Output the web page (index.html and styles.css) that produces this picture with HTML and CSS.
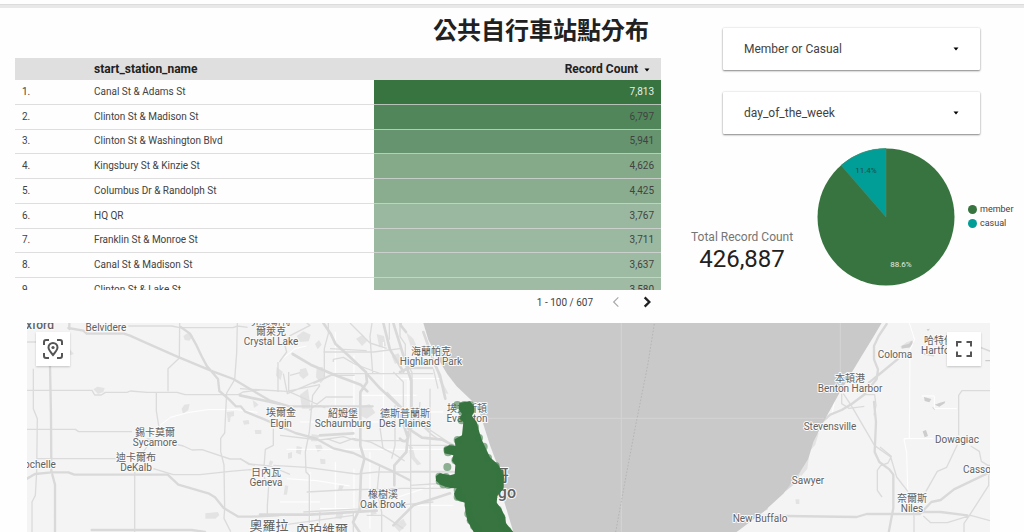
FILE: index.html
```html
<!DOCTYPE html>
<html lang="zh-Hant">
<head>
<meta charset="utf-8">
<meta name="viewport" content="width=device-width, initial-scale=1">
<title>公共自行車站點分布</title>
<link rel="stylesheet" href="styles.css">
</head>
<body>
<main class="report">
  <div class="overview">
    <section class="stations">
      <h1 class="title">公共自行車站點分布</h1>
      <div class="table-view">
        <table class="table">
          <thead>
            <tr><th class="col-rank"></th><th class="col-name">start_station_name</th><th class="col-count">Record Count<svg class="sort" viewBox="0 0 6 4"><path d="M0.5 0.5h5L3 3.5z"/></svg></th></tr>
          </thead>
          <tbody>
            <tr><td>1.</td><td>Canal St &amp; Adams St</td><td class="count light" style="background-color:#37743f">7,813</td></tr>
            <tr><td>2.</td><td>Clinton St &amp; Madison St</td><td class="count" style="background-color:#50865a">6,797</td></tr>
            <tr><td>3.</td><td>Clinton St &amp; Washington Blvd</td><td class="count" style="background-color:#65946e">5,941</td></tr>
            <tr><td>4.</td><td>Kingsbury St &amp; Kinzie St</td><td class="count" style="background-color:#85aa8a">4,626</td></tr>
            <tr><td>5.</td><td>Columbus Dr &amp; Randolph St</td><td class="count" style="background-color:#8aad8f">4,425</td></tr>
            <tr><td>6.</td><td>HQ QR</td><td class="count" style="background-color:#9ab89f">3,767</td></tr>
            <tr><td>7.</td><td>Franklin St &amp; Monroe St</td><td class="count" style="background-color:#9bb9a0">3,711</td></tr>
            <tr><td>8.</td><td>Canal St &amp; Madison St</td><td class="count" style="background-color:#9dbaa2">3,637</td></tr>
            <tr><td>9.</td><td>Clinton St &amp; Lake St</td><td class="count" style="background-color:#9fbba4">3,580</td></tr>
          </tbody>
        </table>
      </div>
      <div class="pager">
        <span>1 - 100 / 607</span>
        <button class="page-btn" type="button" aria-label="Previous page" disabled><svg viewBox="0 0 10 12"><path d="M7 2L3 6l4 4"/></svg></button>
        <button class="page-btn" type="button" aria-label="Next page"><svg viewBox="0 0 10 12"><path d="M3 2l4 4-4 4"/></svg></button>
      </div>
    </section>

    <section class="side">
      <div class="filters">
        <div class="filter">
          <select aria-label="Member or Casual"><option>Member or Casual</option></select>
          <svg class="caret" viewBox="0 0 6 4"><path d="M0.5 0.5h5L3 3.5z"/></svg>
        </div>
        <div class="filter">
          <select aria-label="day_of_the_week"><option>day_of_the_week</option></select>
          <svg class="caret" viewBox="0 0 6 4"><path d="M0.5 0.5h5L3 3.5z"/></svg>
        </div>
      </div>
      <div class="summary">
        <div class="score">
          <div class="score-label">Total Record Count</div>
          <div class="score-value">426,887</div>
        </div>
        <svg class="pie" viewBox="0 0 138 138">
          <circle cx="69" cy="69" r="68.5" fill="#37743f"/>
          <path d="M69 69V0.5A68.5 68.5 0 0 0 24.1 17.3Z" fill="#009e97" stroke="#4c8f73" stroke-width=".6"/>
          <text x="49" y="25" fill="#1d4a46">11.4%</text>
          <text x="84" y="119" fill="#e4ece5">88.6%</text>
        </svg>
        <ul class="legend">
          <li><i class="dot member"></i>member</li>
          <li><i class="dot casual"></i>casual</li>
        </ul>
      </div>
    </section>
  </div>

  <section class="map">
    <svg class="map-canvas" viewBox="27 323 963 209" preserveAspectRatio="xMinYMin slice">
      <rect x="27" y="323" width="963" height="209" fill="#f4f4f4"/>
      <g transform="translate(0 312) scale(.33333)" fill="none" stroke-linejoin="round">
        <!-- parks and built-up patches -->
        <g fill="#e3e3e3">
          <path d="M280 232l12-8 22 4-4 12-16 6zM545 290l8-12 16-2-4 18-16 12zM550 72l12-8 18 8-12 14-14-2zM680 300l22-2v14l-10 2-2 16h-6zM728 326l18-2 2 12-16 2zM758 264l18 14-14 10zM764 354h20v12h-18zM616 604l38-4 4 10-12 10h-30zM208 110l14 16-12 4zM950 168l18-4 6 36-12 14-14-18zM900 172l18-4 8 20-16 14-12-12zM830 165l18 14-6 26-14-14zM890 72l20-14 22 10-6 20-26 2zM945 96l12-12 8 14-12 14zM1068 80l20-12 14 18-16 16zM1130 66l22 6 6 30-20 4zM900 248l24-18 8 60h-26zM1080 286l28-10 18 26-26 18-20-10zM935 366l24 4-8 18h-18zM945 400l18-2 6 14-16 8zM864 424l12-4v18l-12 2zM890 402l16 4-4 22-14-6zM960 440l16 2v14h-14zM810 445l10 4-6 12-8-4zM855 520l10 2-4 26h-10zM1018 520h14l-6 14h-12zM1226 400l12 6 8 30 18 20-12 4-22-26zM760 266l12 8-10 8zM1175 132l20-8 12 20-22 12zM1010 600l20 6-6 16-18-4zM1180 640l30-20 10 18-22 22zM1110 596l16-4 4 14-18 4z"/>
          <path d="M1218 60l22 20 28 64-14-6-22-36zM1310 176l22 44 14 26-10-2-18-38zM2700 105l20-14 18-6 4 8-14 16-22-2zM2428 400l12-14 6-24 10 2-10 34-14 16zM2388 480l30-42 8 2-4 30-18 22zM2386 562h12v14h-10z"/>
        </g>
        <g fill="#cdcdcd"><path d="M2705 101l22-6 8-9 4 8-10 12-24 4zM2772 255l22 6-6 10-14-4zM2804 278l16-6 16-4-2 6-16 10zM2768 358l10-4 6 18-10 4zM2796 286l10 2-2 6zM2780 52l10-2-6 8zM2956 144h14v4h-14z"/></g>
        <!-- local roads -->
        <g stroke="#fff" stroke-width="3">
          <path d="M480 340l32-24 50-14 60-9h90l60 8M835 150l50-40 34-8M1006 60v250M1062 130v250M1150 90v230M1190 200h130M900 330h240M860 412h480M1006 450v160M1062 470v150M1110 420v230M1180 560l120-40M860 500l90 6 100 16M1224 200v140M1240 300h90M930 480v170M960 590h160M1080 250h170M840 570h120M1140 580h220"/>
          <path d="M2728 33l16 50-14 30-2 266-16 2 8 40 4 140M2712 380h88M2765 252h38v38h68M2495 310l10-50 14-20"/>
        </g>
        <!-- arterial roads -->
        <g stroke="#dbdbdb" stroke-width="4">
          <path d="M100 170v120l12 30-2 160-4 70-10 20v90M81 352h145l10 7h160M81 235h195l8 14h20l12-8h65l10-4 50 4h90l24 7h160l14-8 50-6M112 440h240M404 480v180M385 42h130l24 5h160l14-5 30 4M539 33l-1 105-34 32v68M712 33l-2 90-6 80-24 40-6 120-12 16v40l10 40 2 130-2 30 20 40M469 242v55l8 50M440 380l60 10 50 12 26 12 30-1 84 28h32l25 16 18 2M460 470l60 18h80l90-10 60-5 60 4M430 420l20-30M81 90h30l50-20"/>
          <path d="M985 33v32l-12 44v90M870 190l30-8M970 120h150l80-10M850 185l12 60 140-60h60M940 215l54-25h70M1000 187l10-2h290M1000 150v-8l30-6 34 20 80 30M720 230l140 8 100-20M866 180v58l110 50M1058 255h-80l-50 40M960 220l-22 30-10 110-12 60 2 60 10 10v160M820 350v50l-24 12-6 80 16 30-4 60v30M720 440l30 16 60 6 60 25M820 460l100 6 150 20 60-6h280M920 540l110-6 180-5h160M840 370l120 14 70-10 40 12h140M980 380l40 14 40-15 54 12 70 36 30 20M1145 300l-6 40 10 70M1139 460l-8 80 14 60v60M1232 330v330M1168 33v50M1116 33l-6 40 8 110M1200 33v40l16 24v50l20 34v110l24 36 34 40 20 14M1050 33l60 60 50 16M1160 240l60 60 80 72M1180 180l30 30v80M1223 400h120M1230 478h130M1230 520l160-10M1260 270l-6 60 90 60M1290 230v430M1300 170l14 60M1060 600v60M960 600l-4 60M1100 610h50l60 40"/>
          <path d="M838 150l22 -30-8-30 20-20 58-30-10-7M834 150v90M990 110l110 6M910 600l180-10 210-20M840 640l220-30M1185 280v120l-10 40"/>
          <path d="M2530 245l24 36 70 120 48 34 18 60 34 44M2525 245v30l22 14 46-6M2872 398l-32 68-28 12-34 60M2876 370V250l10-14h84M2912 402l26 16 6 30 20 12h6M2966 490v30l-60 94-14 20v26M2742 600v60M2770 612l22 20h50l70-22 58 16M2640 405l34 28-10 20-22 8-10 14v60l14 20M2590 248h34l4 32-6 30"/>
        </g>
        <!-- highways -->
        <g stroke="#d9d9d9" stroke-width="8" stroke-linecap="round">
          <path d="M150 160l3 150 1 168M208 33v18M81 500l24-14 50-5h50l18 7h280l32 30 90 26 20 12 26 32 44 26h40l80-4M157 488l8 30v142M205 48l45 8 10 9h112l18 6 40 18 100 44 110 46 60 22 40 24 68 40 60 18h250M275 654h300l40 6M542 45l28 20 20 36 16 34 14 26 34 40 4 36 30 26 20 20h14l14 16 50 20 100 44 60 16 54 30 60 14 120 56 50 26" stroke-width="7"/>
          <path d="M970 33l22 32 14 30 40 36 52 50 3 30-20 30v160l12 40-10 40-4 110-20 40 20 30 14 70M878 126l54 32 74 32 76 28 20 20M1100 185l40 44 60 56 24 64 42 28 60 6 40 20M1225 360l-6 60-36 40v60M780 608h150l200-12M1224 378l-10-30-20-60M1218 60l-16-20V33M1180 33l20 64 24 80 10 30v140M1270 60l36 100 14 30 16 70M1200 180l26-12h70M960 370l100-6M1180 640l60-60 110-36M720 250l120 26 M1150 33l20 80 40 66M1200 380c16 20 30-4 24-20M1350 400l20 30"/>
          <path d="M2660 36l-24 36-14 30v40l12 30-4 30-14 16M2695 140l-56 46-32 26-12 34-40 30-30 18-34 14-46 40-20 60-22 48-12 50-30 24-60 40-54 48-44 36M2622 270l6 60-4 90 14 30 30 22 12 16v100l-14 74M1940 612h420M2360 612l210 3 30-9h160l34-36 28-6 40-32 50-24 50-24h16M2190 660l50-40 60-30M2742 600h80l80 10" stroke-width="7"/>
          <path d="M2890 88l50 18 32 12M2770 125l30 6" stroke-width="5"/>
        </g>
        <!-- lake -->
        <path fill="#c9c9c9" d="M1270 33l15 50 25 50 32 54 28 36 44 42 26 40 30 95 30 80 10 80 30 100h670l80-60 60-55 50-65 25-40 15-50 25-50 55-100 60-100 40-65 25-42z"/>
        <g stroke="#d4d4d4" stroke-width="3"><path d="M1864 33v627M1440 319h1032M2521 33v200"/></g>
        <path stroke="#aaa" stroke-width="2" stroke-dasharray="5 5" d="M1963 36l-20 124-36 180-36 190-24 130"/>
      </g>
      <g class="labels">
        <text x="26" y="329" class="lg start">xford</text>
        <text x="106" y="331">Belvidere</text>
        <text x="271" y="325">克裏斯特</text><text x="271" y="335">爾萊克</text><text x="271" y="345">Crystal Lake</text>
        <text x="431" y="355">海蘭帕克</text><text x="431" y="365">Highland Park</text>
        <text x="281" y="416">埃爾金</text><text x="281" y="427">Elgin</text>
        <text x="343" y="417">紹姆堡</text><text x="343" y="427">Schaumburg</text>
        <text x="405" y="417">德斯普蘭斯</text><text x="405" y="427">Des Plaines</text>
        <text x="467" y="412">埃文斯頓</text><text x="467" y="422">Evanston</text>
        <text x="155" y="436">錫卡莫爾</text><text x="155" y="446">Sycamore</text>
        <text x="136" y="461">迪卡爾布</text><text x="136" y="471">DeKalb</text>
        <text x="24" y="468" class="start">ochelle</text>
        <text x="266" y="476">日內瓦</text><text x="266" y="486">Geneva</text>
        <text x="383" y="498">橡樹溪</text><text x="383" y="508">Oak Brook</text>
        <text x="269" y="530" class="md">奧羅拉</text><text x="322" y="534" class="md">內珀維爾</text>
        <text x="509" y="481" class="city">芝加哥</text><text x="516" y="498" class="city">Chicago</text>
        <text x="850" y="382">本頓港</text><text x="850" y="392">Benton Harbor</text>
        <text x="895" y="358">Coloma</text>
        <text x="939" y="344">哈特佛</text><text x="921" y="354" class="start">Hartford</text>
        <text x="830" y="430">Stevensville</text>
        <text x="957" y="443">Dowagiac</text>
        <text x="963" y="473" class="start">Cassopolis</text>
        <text x="808" y="484">Sawyer</text>
        <text x="912" y="502">奈爾斯</text><text x="912" y="512">Niles</text>
        <text x="760" y="522">New Buffalo</text>
      </g>
      <!-- bike stations -->
      <g transform="translate(400 312) scale(.33333)" fill="#37743f">
        <path d="M178 272L210 268L222 284L222 300L216 312L230 330L238 360L246 385L258 410L270 436L295 458L312 490L310 530L292 552L290 572L304 590L316 616L318 634L342 662H222L202 626L196 596L194 572L168 562L162 545L170 528L150 528L124 520L108 506L108 492L120 484L150 490L164 486L166 460L156 446L160 430L134 424L132 408L148 400L166 402L164 382L186 370L190 330L178 320L186 306L176 292z"/>
        <g fill-opacity=".55">
          <circle cx="172" cy="279" r="12"/><circle cx="193" cy="279" r="12"/><circle cx="210" cy="279" r="12"/><circle cx="214" cy="294" r="12"/><circle cx="187" cy="300" r="12"/><circle cx="185" cy="325" r="12"/><circle cx="225" cy="345" r="12"/><circle cx="237" cy="378" r="12"/><circle cx="251" cy="404" r="12"/><circle cx="173" cy="384" r="12"/><circle cx="142" cy="413" r="12"/><circle cx="144" cy="421" r="12"/><circle cx="154" cy="411" r="14"/><circle cx="142" cy="465" r="12"/><circle cx="166" cy="445" r="12"/><circle cx="118" cy="494" r="12"/><circle cx="119" cy="507" r="12"/><circle cx="130" cy="517" r="12"/><circle cx="145" cy="518" r="12"/><circle cx="138" cy="495" r="12"/><circle cx="173" cy="534" r="12"/><circle cx="173" cy="555" r="12"/><circle cx="185" cy="558" r="12"/><circle cx="205" cy="580" r="12"/><circle cx="205" cy="605" r="12"/><circle cx="212" cy="625" r="12"/><circle cx="222" cy="642" r="12"/><circle cx="232" cy="652" r="12"/><circle cx="280" cy="578" r="12"/><circle cx="293" cy="593" r="12"/><circle cx="304" cy="616" r="12"/><circle cx="308" cy="640" r="12"/><circle cx="322" cy="656" r="12"/><circle cx="287" cy="462" r="12"/><circle cx="300" cy="482" r="12"/><circle cx="302" cy="504" r="12"/><circle cx="300" cy="522" r="12"/><circle cx="264" cy="438" r="12"/><circle cx="279" cy="548" r="12"/>
        </g>
      </g>
    </svg>
    <button class="map-btn locate" type="button" aria-label="Select area"><svg viewBox="0 0 20 20"><path d="M1 6V3q0-2 2-2h3M14 1h3q2 0 2 2v3M19 14v3q0 2-2 2h-3M6 19H3q-2 0-2-2v-3M10 16C7 12.500 5.500 10.500 5.500 8.500a4.500 4.500 0 0 1 9 0C14.500 10.500 13 12.500 10 16z"/><circle cx="10" cy="8.500" r="1.600" fill="#555" stroke="none"/></svg></button>
    <button class="map-btn full" type="button" aria-label="Full screen"><svg viewBox="0 0 20 20"><path d="M3 7.500V3h4.500M12.500 3H17v4.500M17 12.500V17h-4.500M7.500 17H3v-4.500"/></svg></button>
  </section>
</main>
</body>
</html>
```
FILE: styles.css
```css
*,
*::before {
  box-sizing: border-box;
}

body {
  margin: 0;
  background: #fefefe;
  color: #424242;
  font-family: Roboto, "Noto Sans CJK TC", sans-serif;
  font-size: 10px;
}

button,
select {
  font: inherit;
  color: inherit;
  border: 0;
  padding: 0;
  background: none;
}

.report {
  display: flex;
  flex-direction: column;
  min-height: 100vh;
  overflow: hidden;
}

.report::before {
  content: "";
  height: 4px;
  margin-top: 4px;
  flex: none;
  background: #e8e8e8;
  border-top: 1px solid #dcdcdc;
}

.overview {
  display: grid;
  grid-template-columns: 646fr 333fr;
  gap: 30px;
  padding-left: 15px;
}

.title {
  margin: 0;
  padding: 5px 12px 9px 0;
  text-align: right;
  font-size: 24px;
  line-height: 36px;
  font-weight: 700;
  color: #212121;
}

.table-view {
  height: 232px;
  overflow: hidden;
}

.table {
  width: 100%;
  height: 245px;
  border-spacing: 0;
  table-layout: fixed;
  line-height: 14px;
}

.table thead tr {
  height: 22px;
}

.table th {
  padding: 0 7px;
  background: #dfdfdf;
  color: #212121;
  font-size: 12px;
  text-align: left;
}

.table td {
  padding: 0 7px;
  border-bottom: 1px solid rgba(214, 214, 214, 0.8);
}

.col-rank {
  width: 72px;
}

.table th.col-count {
  width: 287px;
  text-align: right;
  padding-right: 11px;
}

.table .count {
  text-align: right;
}

.table .light {
  color: #e8efe9;
}

.sort {
  width: 6px;
  height: 4px;
  margin-left: 6px;
  vertical-align: middle;
}

.pager {
  display: flex;
  justify-content: flex-end;
  align-items: center;
  height: 24px;
  padding-right: 6px;
}

.page-btn {
  display: flex;
  width: 16px;
  margin-left: 15px;
}

.page-btn svg {
  width: 16px;
  height: 14px;
  fill: none;
  stroke: #212121;
  stroke-width: 2;
}

.page-btn:disabled svg {
  stroke: #a8a8a8;
  stroke-width: 1;
}

.filters {
  display: grid;
  gap: 22px;
  padding: 20px 44px 0 32px;
}

.filter {
  display: grid;
  grid-template-columns: 1fr 6px;
  align-items: center;
  height: 42px;
  padding-right: 21px;
  border-radius: 1px;
  background: #fff;
  box-shadow: 0 1px 2px rgba(0, 0, 0, 0.45), 0 0 2px rgba(0, 0, 0, 0.15);
}

.filter select {
  appearance: none;
  height: 42px;
  padding-left: 21px;
  font-size: 12px;
}

.caret {
  width: 6px;
  height: 4px;
}

.summary {
  display: flex;
  padding-top: 14px;
}

.score {
  width: 102px;
  margin-right: 24px;
  padding-top: 80px;
  text-align: center;
  white-space: nowrap;
}

.score-label {
  font-size: 12px;
  line-height: 18px;
  color: #757575;
}

.score-value {
  font-size: 24px;
  line-height: 26px;
  color: #212121;
}

.pie {
  width: 138px;
  height: 138px;
  font-size: 8px;
  text-anchor: middle;
}

.legend {
  list-style: none;
  margin: 0;
  padding: 54px 0 0 13px;
  font-size: 9px;
  line-height: 14px;
}

.legend li {
  display: flex;
  align-items: center;
  gap: 3px;
}

.dot {
  width: 9px;
  height: 9px;
  border-radius: 50%;
}

.member {
  background: #37743f;
}

.casual {
  background: #009e97;
}

.map {
  position: relative;
  flex: 1;
  min-height: 209px;
  margin: 9px 34px 0 27px;
}

.map-canvas {
  position: absolute;
  width: 100%;
  height: 100%;
}

.labels {
  font-size: 10px;
  text-anchor: middle;
  fill: #616161;
  stroke: #fafafa;
  stroke-width: 2px;
  stroke-linejoin: round;
  paint-order: stroke;
}

.labels .start {
  text-anchor: start;
}

.labels .lg {
  font-size: 12px;
  font-weight: 500;
}

.labels .md {
  font-size: 13px;
}

.labels .city {
  font-size: 16px;
  font-weight: 500;
  text-anchor: end;
}

.map-btn {
  position: absolute;
  top: 9px;
  display: grid;
  place-items: center;
  width: 34px;
  height: 34px;
  background: #fff;
  box-shadow: 0 1px 2px rgba(0, 0, 0, 0.2);
}

.map-btn svg {
  width: 20px;
  height: 20px;
  fill: none;
  stroke: #555;
  stroke-width: 2;
}

.locate {
  left: 9px;
}

.full {
  right: 9px;
}
```
